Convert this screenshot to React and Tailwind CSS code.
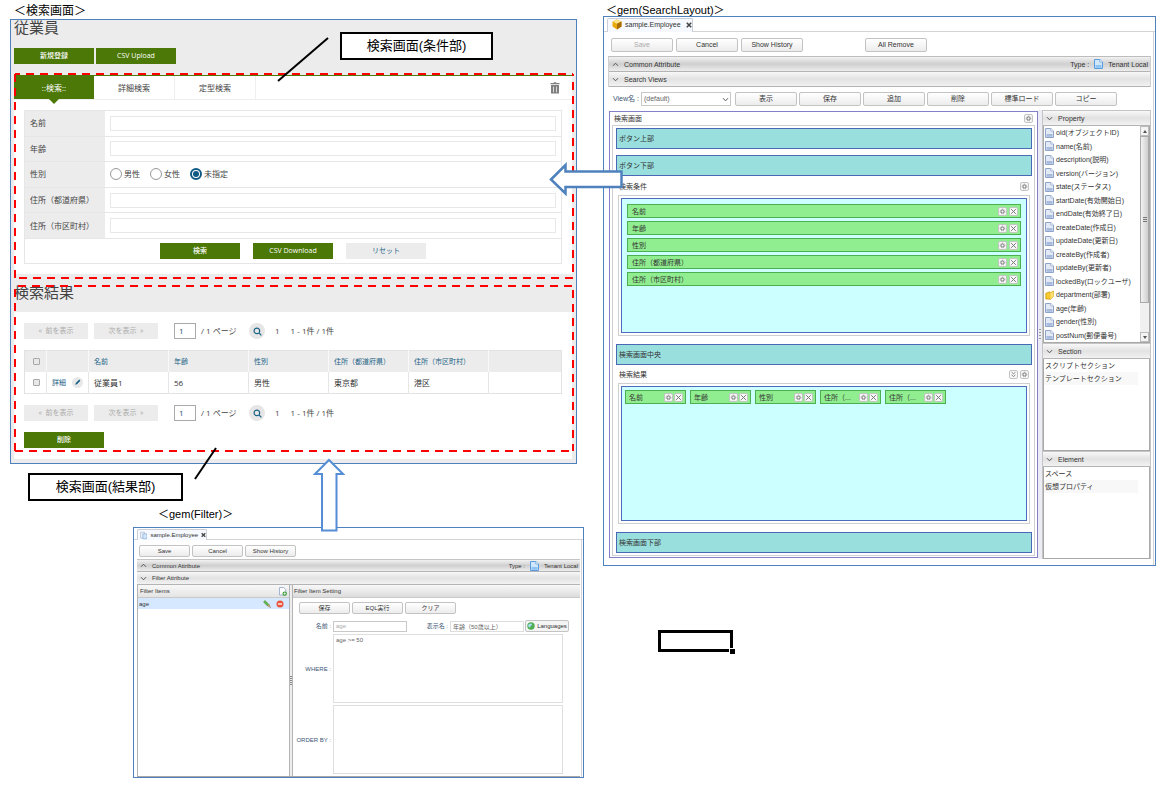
import React from "react";

const JP = "font-['Liberation_Sans','Noto_Sans_CJK_JP',sans-serif]";
const UI = "font-['Open_Sans','Noto_Sans_CJK_JP',sans-serif]";

/* ---------- icons ---------- */

const Chevron = ({ up }) => (
  <svg width="7" height="7" viewBox="0 0 7 7" fill="none" stroke="#555" strokeWidth="1">
    <path d={up ? "M1 4.8 3.5 2.2 6 4.8" : "M1 2.2 3.5 4.8 6 2.2"} />
  </svg>
);

const DocIcon = ({ bright }) => (
  <svg className="shrink-0" width="9" height="10" viewBox="0 0 9 10">
    <path
      d="M.5.5h5.3L8.5 3v6.5h-8z"
      fill={bright ? "#cfe6fb" : "#e3eaf6"}
      stroke={bright ? "#5b9bdc" : "#8ea3c8"}
    />
    <path d="M5.8.5V3h2.7" fill="#fff" stroke={bright ? "#5b9bdc" : "#8ea3c8"} strokeWidth=".7" />
    <path d="M1.5 6h6v2.8h-6z" fill={bright ? "#8dc3f2" : "#a9bbdc"} />
  </svg>
);

const FolderIcon = () => (
  <svg className="shrink-0" width="9" height="10" viewBox="0 0 9 10">
    <path d="M.8 3.2 5 1.8l.8.9L8.4 1v5.6L5.6 9.2.8 9z" fill="#f7c92e" stroke="#c8930c" strokeWidth=".7" />
    <path d="M5.6 3.6 8.4 1.2v5.4L5.6 9.1z" fill="#fde27a" />
  </svg>
);

const CubeIcon = () => (
  <svg width="10" height="11" viewBox="0 0 10 11">
    <path d="M5 .5 9.5 2.6v5L5 10.5.5 7.6v-5z" fill="#e9a90b" />
    <path d="M5 .5 9.5 2.6 5 4.8.5 2.6z" fill="#fde488" />
    <path d="M5 4.8 9.5 2.6v5L5 10.5z" fill="#a96c04" />
  </svg>
);

const SheetsIcon = () => (
  <svg width="9" height="9" viewBox="0 0 9 9">
    <path d="M.5.5h5v7h-5z" fill="#eef2f8" stroke="#a9b6cc" strokeWidth=".8" />
    <path d="M3.5 2.5h5v6h-5z" fill="#d3e6fa" stroke="#7fa6d4" strokeWidth=".8" />
  </svg>
);

const TabClose = () => (
  <svg width="6" height="6" viewBox="0 0 6 6" stroke="#444" strokeWidth="1.6">
    <path d="M.8.8l4.4 4.4M5.2.8.8 5.2" />
  </svg>
);

const Trash = () => (
  <svg width="10" height="12" viewBox="0 0 10 12" fill="#808080">
    <path d="M.5 1h3l.5-.7h2l.5.7h3v1.3h-9zM1 3h8v8.6H1z" />
    <path d="M3.5 4.6v5.6M6.5 4.6v5.6" stroke="#d8d8d8" strokeWidth="1" />
  </svg>
);

const Magnifier = () => (
  <svg width="9" height="9" viewBox="0 0 9 9" fill="none" stroke="#1b6385" strokeWidth="1.2">
    <circle cx="3.9" cy="3.9" r="2.8" />
    <path d="M6 6l2.4 2.4" />
  </svg>
);

const Pen = () => (
  <svg width="6" height="6" viewBox="0 0 6 6">
    <path d="M.3 5.7.8 4 4.2.6 5.4 1.8 2 5.2z" fill="#1b6385" />
  </svg>
);

const MiniButton = ({ label, children }) => (
  <button
    type="button"
    aria-label={label}
    className="flex size-[9px] shrink-0 items-center justify-center rounded-[2px] border border-[#c4c4c4] bg-[#f8f8f8]"
  >
    <svg width="7" height="7" viewBox="0 0 7 7" fill="none" stroke="#777" strokeWidth="1" className="shrink-0">
      {children}
    </svg>
  </button>
);

const GearButton = () => (
  <MiniButton label="設定">
    <circle cx="3.5" cy="3.5" r="1.5" />
    <circle cx="3.5" cy="3.5" r="2.4" strokeWidth=".7" strokeDasharray="1 .9" />
  </MiniButton>
);

const CloseButton = () => (
  <MiniButton label="削除">
    <path d="M1.2 1.2l4.6 4.6M5.8 1.2 1.2 5.8" />
  </MiniButton>
);

const ExpandButton = () => (
  <MiniButton label="展開">
    <path d="M1.6 1.2 3.5 2.8 5.4 1.2M1.6 3.9 3.5 5.5 5.4 3.9" strokeWidth=".9" />
  </MiniButton>
);

/* ---------- search screen ---------- */

const GreenButton = ({ children }) => (
  <button type="button" className="h-4 w-20 bg-[#4b7806] text-[7px] leading-4 font-medium text-white">
    {children}
  </button>
);

const DashedFrame = ({ className, phase }) => (
  <svg
    className={`pointer-events-none absolute overflow-visible ${className}`}
    stroke="#ff0000"
    strokeWidth="2"
    strokeDasharray="8 6"
  >
    <line x1="0" y1="0" x2="100%" y2="0" strokeDashoffset={phase.top} />
    <line x1="100%" y1="0" x2="100%" y2="100%" strokeDashoffset={phase.right} />
    <line x1="0" y1="100%" x2="100%" y2="100%" strokeDashoffset={phase.bottom} />
    <line x1="0" y1="0" x2="0" y2="100%" strokeDashoffset={phase.left} />
  </svg>
);

const FormRow = ({ id, label, children }) => (
  <div className="flex min-h-0 flex-1 border-b border-[#e6e6e6]">
    <div className="flex w-[80px] shrink-0 items-center bg-[#ececec] pl-[5px]">
      <label htmlFor={id} className="text-[8px] leading-[10px] whitespace-nowrap">
        {label}
      </label>
    </div>
    <div className="flex flex-1 items-center px-[5px]">
      {children || <input id={id} type="text" className="h-[15px] w-full border border-[#e8e8e8] bg-white px-1 text-[8px]" />}
    </div>
  </div>
);

const Radio = ({ label, checked }) => (
  <label className="flex items-center gap-[2px] text-[8px] leading-3">
    <input
      type="radio"
      name="gender"
      defaultChecked={checked}
      className="size-3 appearance-none rounded-full border border-[#999] bg-white checked:border-2 checked:border-[#0e5a85] checked:bg-[#0e5a85] checked:bg-clip-content checked:p-[1px]"
    />
    {label}
  </label>
);

const Pager = ({ id }) => (
  <div className="flex h-4 items-center text-[8px] leading-4">
    <button type="button" className="h-4 w-16 bg-[#ececec] text-[7px] leading-4 text-[#aaa]">
      «&nbsp; 前を表示
    </button>
    <button type="button" className="ml-[6px] h-4 w-16 bg-[#ececec] text-[7px] leading-4 text-[#aaa]">
      次を表示 &nbsp;»
    </button>
    <input
      id={id}
      aria-label="ページ番号"
      type="text"
      defaultValue="1"
      className="ml-4 h-4 w-[22px] border border-[#aaa] bg-white px-1 text-[8px] text-[#1b4f72]"
    />
    <label htmlFor={id} className="ml-[5px] w-[42px] whitespace-nowrap">
      / 1 ページ
    </label>
    <button type="button" aria-label="ページ移動" className="ml-[6px] flex size-4 items-center justify-center rounded-full bg-[#e6e6e6]">
      <Magnifier />
    </button>
    <span className="ml-[10px]">1</span>
    <span className="ml-[11px] whitespace-nowrap">1 - 1件 / 1件</span>
  </div>
);

const Check = ({ label }) => (
  <input
    type="checkbox"
    aria-label={label}
    className="block size-[7px] appearance-none rounded-[1px] border border-[#a8a8a8] bg-[#e8e8e8]"
  />
);

const resultColumns = ["名前", "年齢", "性別", "住所（都道府県）", "住所（市区町村）"];
const resultRow = ["従業員1", "56", "男性", "東京都", "港区"];

function SearchScreen() {
  return (
    <section className={`border border-[#4f81bd] bg-[#ececec] pr-1 pb-1 pl-[3px] text-[#444] ${UI}`}>
      <h1 className="h-7 text-[15px] leading-[15px] text-[#444]">従業員</h1>
      <div className="flex gap-[2px]">
        <GreenButton>新規登録</GreenButton>
        <GreenButton>CSV Upload</GreenButton>
      </div>

      <div className="relative mt-[11px] border-t border-[#4b7806] bg-white pb-[10px]">
        <nav className="flex h-6 border-b border-[#eee] text-[8px] leading-[23px]">
          <button type="button" className="relative h-[23px] w-20 bg-[#4b7806] text-white">
            ::検索::
            <svg className="absolute top-[22px] left-[34px]" width="12" height="6" viewBox="0 0 12 6">
              <path d="M0 0h12L6 6z" fill="#4b7806" />
            </svg>
          </button>
          <button type="button" className="w-[81px] border-r border-[#eee]">詳細検索</button>
          <button type="button" className="w-[81px] border-r border-[#eee]">定型検索</button>
          <button type="button" aria-label="クリア" className="mr-3 ml-auto flex items-center">
            <Trash />
          </button>
        </nav>
        <form className="mx-[10px] mt-[10px] border border-[#e6e6e6]">
          <div className="flex h-[128px] flex-col">
            <FormRow id="f-name" label="名前" />
            <FormRow id="f-age" label="年齢" />
            <FormRow label="性別">
              <div className="flex gap-[10px]">
                <Radio label="男性" />
                <Radio label="女性" />
                <Radio label="未指定" checked />
              </div>
            </FormRow>
            <FormRow id="f-pref" label="住所（都道府県）" />
            <FormRow id="f-city" label="住所（市区町村）" />
          </div>
          <div className="flex h-6 items-center justify-center gap-[13px]">
            <GreenButton>検索</GreenButton>
            <GreenButton>CSV Download</GreenButton>
            <button type="reset" className="h-4 w-20 bg-[#ececec] text-[7px] leading-4 text-[#1b6385]">
              リセット
            </button>
          </div>
        </form>
        <DashedFrame
          className="top-[-2px] left-[1px] h-[204px] w-full"
          phase={{ top: 3, right: 6, bottom: 10, left: 0 }}
        />
      </div>

      <div className="relative">
        <h2 className="h-[38px] pt-[9px] text-[15px] leading-[18px]">検索結果</h2>
        <div className="bg-white px-[10px] py-[11px]">
          <Pager id="page-top" />
          <table className="my-[11px] w-full table-fixed border-collapse border border-[#e2e2e2] text-left text-[7px] leading-[9px]">
            <colgroup>
              <col className="w-[22px]" />
              <col className="w-[42px]" />
              <col className="w-[80px]" />
              <col className="w-[80px]" />
              <col className="w-[80px]" />
              <col className="w-[80px]" />
              <col className="w-[80px]" />
              <col />
            </colgroup>
            <thead>
              <tr className="h-[21px] bg-[#ececec] text-[#1b6385]">
                <th className="border-r border-[#f8f8f8] p-0 pl-2">
                  <Check label="すべて選択" />
                </th>
                <th className="border-r border-[#f8f8f8]" />
                {resultColumns.map((c) => (
                  <th key={c} className="border-r border-[#f8f8f8] p-0 pl-[5px] font-normal whitespace-nowrap">
                    {c}
                  </th>
                ))}
                <th />
              </tr>
            </thead>
            <tbody>
              <tr className="h-[22px] text-[#333]">
                <td className="border-r border-[#e6e6e6] p-0 pl-2">
                  <Check label="従業員1を選択" />
                </td>
                <td className="border-r border-[#e6e6e6] p-0 pl-[5px]">
                  <span className="flex items-center justify-between pr-[5px]">
                    <a href="#detail" className="text-[#1b6385]">
                      詳細
                    </a>
                    <button type="button" aria-label="編集" className="flex size-[11px] items-center justify-center rounded-full bg-[#e8e8e8]">
                      <Pen />
                    </button>
                  </span>
                </td>
                {resultRow.map((c) => (
                  <td key={c} className="border-r border-[#e6e6e6] p-0 pl-[5px] text-[8px]">
                    {c}
                  </td>
                ))}
                <td />
              </tr>
            </tbody>
          </table>
          <Pager id="page-bottom" />
          <div className="mt-[11px] flex">
            <GreenButton>削除</GreenButton>
          </div>
        </div>
        <DashedFrame
          className="top-[12px] left-[1px] h-[165px] w-full"
          phase={{ top: 11, right: 10, bottom: 0, left: 11 }}
        />
      </div>
    </section>
  );
}

/* ---------- gem editor pieces ---------- */

const PushButton = ({ small, muted, children }) => (
  <button
    type="button"
    className={`rounded-[2px] border border-[#c3c3c3] bg-linear-to-b from-white to-[#ececec] text-center whitespace-nowrap ${
      small ? "h-3 w-[51px] text-[6px] leading-[10px]" : "h-[14px] w-[62px] text-[7px] leading-3"
    } ${muted ? "text-[#aaa]" : "text-[#333]"}`}
  >
    {children}
  </button>
);

const TypeLabel = () => (
  <span className="ml-auto flex items-center gap-[5px] pr-[2px]">
    Type :
    <DocIcon bright />
    Tenant Local
  </span>
);

const barTone = {
  dark: "from-[#f2f2f2] via-[#cfcfcf] to-[#ededed]",
  light: "from-[#f8f8f8] via-[#e2e2e2] to-[#f2f2f2]",
};

const Bar = ({ tone, size, up, title, children }) => (
  <div
    className={`flex items-center gap-[5px] border-b border-[#b4b4b4] bg-linear-to-b pl-[3px] text-[#333] ${barTone[tone]} ${size}`}
  >
    <Chevron up={up} />
    <span>{title}</span>
    {children}
  </div>
);

const Strip = ({ children }) => (
  <div className="h-[21px] border border-[#4a68b5] bg-[#99dfdd] px-[2px] leading-[19px]">{children}</div>
);

const DropArea = ({ title, tools, children }) => (
  <div className="mx-[2px]">
    <div className="flex h-[17px] items-center justify-between pl-[1px]">
      <span>{title}</span>
      <span className="flex gap-[2px] pr-[1px]">{tools}</span>
    </div>
    <div className="h-[141px] border border-[#cfcfcf] p-[2px]">
      <div className="h-full border border-[#4f6cbc] bg-[#ccffff]">{children}</div>
    </div>
  </div>
);

const conditions = ["名前", "年齢", "性別", "住所（都道府県）", "住所（市区町村）"];
const resultCells = ["名前", "年齢", "性別", "住所（...", "住所（..."];
const properties = [
  "oid(オブジェクトID)",
  "name(名前)",
  "description(説明)",
  "version(バージョン)",
  "state(ステータス)",
  "startDate(有効開始日)",
  "endDate(有効終了日)",
  "createDate(作成日)",
  "updateDate(更新日)",
  "createBy(作成者)",
  "updateBy(更新者)",
  "lockedBy(ロックユーザ)",
  "department(部署)",
  "age(年齢)",
  "gender(性別)",
  "postNum(郵便番号)",
];

const SideList = ({ title, items }) => (
  <div className="border-t border-[#c4c4c4]">
    <Bar tone="light" size="h-[15px]" title={title} />
    <ul className="h-[92px] border border-t-0 border-[#a8a8a8] bg-white">
      {items.map((t, i) => (
        <li key={t} className={`mr-[11px] h-[13px] pl-[1px] leading-[13px] ${i % 2 ? "bg-[#f8f8f8]" : ""}`}>
          {t}
        </li>
      ))}
    </ul>
  </div>
);

function LayoutEditor() {
  return (
    <section className={`border border-[#4f81bd] bg-white text-[7px] leading-[9px] text-[#333] ${JP}`}>
      <div className="flex h-[15px] items-end border-b border-[#d4d4d4] pl-[3px]">
        <div className="-mb-px flex h-[14px] w-[86px] items-center gap-[3px] rounded-t-[2px] border border-b-0 border-[#c9ced8] bg-[#f6f9ff] pb-[2px] pl-1">
          <CubeIcon />
          <span className="mr-[2px]">sample.Employee</span>
          <TabClose />
        </div>
      </div>
      <div className="mr-[1px] border-r border-[#d4d4d4] pr-[2px] pb-[6px] pl-1">
        <div className="flex gap-[3px] pt-[6px] pb-1 pl-[3px]">
          <PushButton muted>Save</PushButton>
          <PushButton>Cancel</PushButton>
          <PushButton>Show History</PushButton>
          <span className="w-[56px]" />
          <PushButton>All Remove</PushButton>
        </div>
        <div className="border border-b-0 border-[#cfcfcf] border-t-[#bdbdbd]">
          <Bar tone="dark" size="h-[15px]" up title="Common Attribute">
            <TypeLabel />
          </Bar>
          <Bar tone="light" size="h-[15px]" title="Search Views" />
        </div>
        <div className="flex h-[23px] items-center gap-[2px] pl-[5px]">
          <label htmlFor="view-name" className="text-[#3b5573]">
            View名 :
          </label>
          <span className="relative flex">
            <select
              id="view-name"
              className="h-[14px] w-[90px] appearance-none border border-[#c8c8c8] bg-white pl-[2px] text-[7px] text-[#666]"
            >
              <option>(default)</option>
            </select>
            <span className="pointer-events-none absolute top-[4px] right-[2px]">
              <Chevron />
            </span>
          </span>
          <div className="ml-[2px] flex flex-wrap gap-[2px]">
            {["表示", "保存", "追加", "削除", "標準ロード", "コピー"].map((t) => (
              <PushButton key={t}>{t}</PushButton>
            ))}
          </div>
        </div>

        <div className="flex">
          <div className="mt-[1px] ml-[1px] h-[447px] flex-1 border border-[#8280c8] p-[2px] pt-0">
            <div className="flex h-[13px] items-center justify-between pr-[2px] pl-[2px]">
              <span>検索画面</span>
              <GearButton />
            </div>
            <div className="h-[431px] border border-[#cfcfcf] pt-[2px] pr-[2px] pl-[3px]">
              <Strip>ボタン上部</Strip>
              <div className="h-[6px]" />
              <Strip>ボタン下部</Strip>
              <div className="h-[2px]" />
              <DropArea title="検索条件" tools={<GearButton />}>
                <ul className="flex flex-col gap-[3px] p-[5px]">
                  {conditions.map((c) => (
                    <li
                      key={c}
                      className="flex h-[14px] items-center gap-[2px] border border-[#4caf50] bg-[#90ee90] pr-[2px] pl-[4px]"
                    >
                      <span className="mr-auto">{c}</span>
                      <GearButton />
                      <CloseButton />
                    </li>
                  ))}
                </ul>
              </DropArea>
              <div className="h-[8px]" />
              <Strip>検索画面中央</Strip>
              <div className="h-[1px]" />
              <DropArea
                title="検索結果"
                tools={
                  <>
                    <ExpandButton />
                    <GearButton />
                  </>
                }
              >
                <ul className="flex gap-1 p-[3px]">
                  {resultCells.map((c, i) => (
                    <li
                      key={i}
                      className="flex h-[14px] w-[61px] items-center gap-[1px] border border-[#4caf50] bg-[#90ee90] pr-[2px] pl-[3px]"
                    >
                      <span className="mr-auto whitespace-nowrap">{c}</span>
                      <GearButton />
                      <CloseButton />
                    </li>
                  ))}
                </ul>
              </DropArea>
              <div className="h-[8px]" />
              <Strip>検索画面下部</Strip>
            </div>
          </div>

          <div className="flex w-1 items-center justify-center bg-[#ececf4]">
            <svg width="2" height="12" viewBox="0 0 2 12" stroke="#999" strokeDasharray="1 2" strokeWidth="2">
              <path d="M1 0v12" />
            </svg>
          </div>

          <aside className="w-[109px] border-x border-[#c4c4c4]">
            <Bar tone="light" size="h-4 border-t border-t-[#c4c4c4]" title="Property" />
            <div className="flex h-[217px] border border-t-0 border-[#a8a8a8]">
              <ul className="flex min-w-0 flex-1 flex-col">
                {properties.map((p) => (
                  <li key={p} className="flex min-h-0 flex-1 items-center gap-[2px] pl-[1px] whitespace-nowrap">
                    {p.startsWith("department") ? <FolderIcon /> : <DocIcon />}
                    {p}
                  </li>
                ))}
              </ul>
              <div className="flex w-[9px] flex-col bg-[#f0f0f0]">
                <span className="flex h-[10px] items-center justify-center border border-[#bbb] bg-[#f4f4f4]">
                  <svg width="4" height="3" viewBox="0 0 4 3">
                    <path d="M0 3 2 0l2 3z" fill="#555" />
                  </svg>
                </span>
                <span className="flex h-[167px] items-center justify-center border border-[#a9a9a9] bg-linear-to-r from-[#f2f2f2] to-[#cfcfcf]">
                  <svg width="4" height="5" viewBox="0 0 4 5" stroke="#777" strokeWidth="1">
                    <path d="M0 .5h4M0 2.5h4M0 4.5h4" />
                  </svg>
                </span>
                <span className="mt-auto flex h-[10px] items-center justify-center border border-[#bbb] bg-[#f4f4f4]">
                  <svg width="4" height="3" viewBox="0 0 4 3">
                    <path d="M0 0h4L2 3z" fill="#555" />
                  </svg>
                </span>
              </div>
            </div>
            <SideList title="Section" items={["スクリプトセクション", "テンプレートセクション"]} />
            <SideList title="Element" items={["スペース", "仮想プロパティ"]} />
          </aside>
        </div>
      </div>
    </section>
  );
}

/* ---------- filter editor ---------- */

function FilterEditor() {
  return (
    <section className={`border border-[#4f81bd] bg-white text-[6px] leading-[8px] text-[#333] ${JP}`}>
      <div className="flex h-3 items-end border-b border-[#d4d4d4] pl-[3px]">
        <div className="-mb-px flex h-[11px] w-[70px] items-center gap-[3px] rounded-t-[2px] border border-b-0 border-[#c9ced8] bg-[#f6f9ff] pl-[2px]">
          <SheetsIcon />
          <span className="whitespace-nowrap">sample.Employee</span>
          <TabClose />
        </div>
      </div>
      <div className="mr-[1px] border-r border-[#d4d4d4] pr-[1px] pl-[3px]">
        <div className="flex gap-[2px] pt-[5px] pb-[2px] pl-[2px]">
          <PushButton small>Save</PushButton>
          <PushButton small>Cancel</PushButton>
          <PushButton small>Show History</PushButton>
        </div>
        <Bar tone="dark" size="h-[13px] border-t border-t-[#c4c4c4]" up title="Common Attribute">
          <TypeLabel />
        </Bar>
        <Bar tone="light" size="h-[13px]" title="Filter Attribute" />
        <div className="flex h-[192px] border-b border-[#a8a8a8]">
          <div className="flex w-[155px] flex-col border-x border-[#b4b4b4]">
            <div className="flex h-[13px] items-center justify-between border-b border-[#c9c9c9] bg-linear-to-b from-[#f8f8f8] to-[#e4e4e4] px-[2px]">
              <span>Filter Items</span>
              <button type="button" aria-label="追加">
                <svg width="8" height="9" viewBox="0 0 8 9">
                  <path d="M.5.5h4.2L6.8 2.6V8H.5z" fill="#fff" stroke="#8ea3c8" strokeWidth=".8" />
                  <circle cx="5.7" cy="6.6" r="2.2" fill="#3a9a34" />
                  <path d="M5.7 5.3v2.6M4.4 6.6H7" stroke="#fff" strokeWidth=".7" />
                </svg>
              </button>
            </div>
            <div className="flex h-[11px] items-center gap-[5px] bg-[#d6e8ff] pr-[5px] pl-[1px]">
              <span className="mr-auto">age</span>
              <button type="button" aria-label="編集">
                <svg width="8" height="8" viewBox="0 0 8 8">
                  <path d="M.5 2 2 .5l4 4-1.5 1.5z" fill="#63b94a" stroke="#3b7d2a" strokeWidth=".5" />
                  <path d="M6 4.5 7.6 7.6 4.5 6z" fill="#e8b878" stroke="#7a5a2e" strokeWidth=".4" />
                </svg>
              </button>
              <button type="button" aria-label="削除">
                <svg width="8" height="8" viewBox="0 0 8 8">
                  <circle cx="4" cy="4" r="3.5" fill="#e8553c" />
                  <path d="M2 4h4" stroke="#fff" strokeWidth="1.3" />
                </svg>
              </button>
            </div>
          </div>
          <div className="flex w-[2px] items-center bg-[#eee]">
            <svg width="2" height="10" viewBox="0 0 2 10" stroke="#888" strokeDasharray="1 1" strokeWidth="2">
              <path d="M1 0v10" />
            </svg>
          </div>
          <div className="flex-1 border-l border-[#b4b4b4]">
            <div className="flex h-[13px] items-center border-b border-[#c9c9c9] bg-linear-to-b from-[#f8f8f8] to-[#dcdcdc] px-[1px]">
              Filter Item Setting
            </div>
            <div className="flex gap-[2px] pt-1 pb-[6px] pl-[6px]">
              <PushButton small>保存</PushButton>
              <PushButton small>EQL実行</PushButton>
              <PushButton small>クリア</PushButton>
            </div>
            <div className="mr-[11px] grid grid-cols-[38px_1fr] items-center gap-x-[2px] gap-y-[2px] text-[#666]">
              <label htmlFor="flt-name" className="text-right text-[#3b5573]">
                名前 :
              </label>
              <div className="flex h-3 items-center">
                <input
                  id="flt-name"
                  type="text"
                  defaultValue="age"
                  className="h-[11px] w-[74px] border border-[#c8c8c8] px-[2px] text-[6px] text-[#aaa]"
                />
                <label htmlFor="flt-label" className="w-[43px] pr-[2px] text-right text-[#3b5573]">
                  表示名 :
                </label>
                <input
                  id="flt-label"
                  type="text"
                  defaultValue="年齢（50歳以上）"
                  className="h-[11px] w-[74px] border border-[#ddd] px-[2px] text-[6px]"
                />
                <button
                  type="button"
                  className="ml-[1px] flex h-3 w-[44px] shrink-0 items-center justify-center gap-[2px] rounded-[2px] border border-[#c3c3c3] bg-[#f4f4f4] text-[#333]"
                >
                  <svg width="8" height="8" viewBox="0 0 8 8">
                    <circle cx="4" cy="4" r="3.7" fill="#4fae52" />
                    <path d="M2 2.2C3.4 1 5 1.4 5 2.6S3 4 3.2 5.2 1.6 5 1.2 4 1.4 2.7 2 2.2z" fill="#a9dcf5" />
                  </svg>
                  Languages
                </button>
              </div>
              <label htmlFor="flt-where" className="text-right text-[#3b5573]">
                WHERE :
              </label>
              <textarea
                id="flt-where"
                defaultValue="age >= 50"
                className="mr-[6px] block h-[69px] resize-none border border-[#dedede] px-[2px] py-[1px] text-[6px] leading-[8px]"
              />
              <label htmlFor="flt-order" className="text-right whitespace-nowrap text-[#3b5573]">
                ORDER BY :
              </label>
              <textarea
                id="flt-order"
                className="mr-[6px] block h-[69px] resize-none border border-[#dedede] px-[2px] text-[6px]"
              />
            </div>
          </div>
        </div>
      </div>
    </section>
  );
}

/* ---------- page ---------- */

const Callout = ({ className, children }) => (
  <div
    className={`absolute h-7 border-2 border-black bg-white text-center text-[13px] leading-6 text-black ${JP} ${className}`}
  >
    {children}
  </div>
);

export default function App() {
  return (
    <main className="flex items-start gap-[26px] bg-white pt-1 pr-2 pb-3 pl-[10px] text-black">
      <div className="relative min-w-0 flex-[567]">
        <p className={`mb-[1px] pl-1 text-[12px] leading-[14px] ${JP}`}>＜検索画面＞</p>
        <SearchScreen />
        <p className={`mt-[43px] mb-[6px] pl-[148px] text-[11px] leading-[14px] ${JP}`}>＜gem(Filter)＞</p>
        <div className="-mr-[7px] ml-[123px]">
          <FilterEditor />
        </div>

        <svg className="absolute top-[32px] left-[266px]" width="54" height="47" viewBox="0 0 54 47">
          <path d="M52 2 2 45" stroke="#000" strokeWidth="2" />
        </svg>
        <Callout className="top-[28px] left-[330px] w-[153px]">検索画面(条件部)</Callout>
        <svg className="absolute top-[443px] left-[183px]" width="25" height="34" viewBox="0 0 25 34">
          <path d="M23 1 2 32" stroke="#000" strokeWidth="2" />
        </svg>
        <Callout className="top-[469px] left-[18px] w-[155px]">検索画面(結果部)</Callout>
        <svg className="absolute top-[454px] left-[303px]" width="32" height="74" viewBox="0 0 32 74">
          <path d="M16 2 30 16H23.500V72.500H9V16H2z" fill="#fff" stroke="#558ed5" strokeWidth="2" />
        </svg>
      </div>

      <div className="relative min-w-0 flex-[553]">
        <p className={`relative z-10 h-3 pl-[3px] text-[11px] leading-[13px] ${JP}`}>＜gem(SearchLayout)＞</p>
        <LayoutEditor />
        <div className="relative mt-16 ml-[55px] h-[22px] w-[75px] border-[3px] border-black">
          <span className="absolute -right-[5px] -bottom-[5px] size-[6px] border-t border-l border-white bg-black" />
        </div>
        <svg className="absolute top-[158px] -left-[54px]" width="75" height="34" viewBox="0 0 75 34">
          <path d="M2 17.500 16.500 3V9.500H72.500V25H16.500V31.500z" fill="#fff" stroke="#4f81bd" strokeWidth="2.500" />
        </svg>
      </div>
    </main>
  );
}
